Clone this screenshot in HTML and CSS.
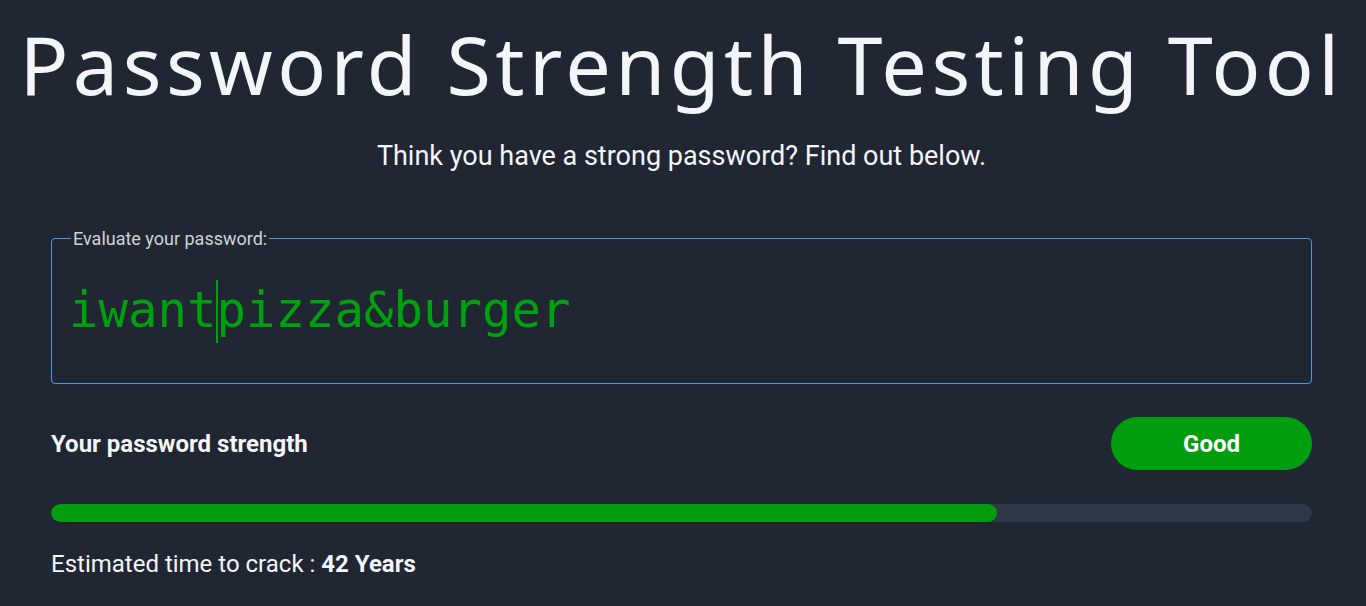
FILE: index.html
```html
<!DOCTYPE html>
<html lang="en">
<head>
<meta charset="utf-8">
<title>Password Strength Testing Tool</title>
<link rel="stylesheet" href="styles.css">
</head>
<body>
<main class="page">
  <h1 class="title">Password Strength Testing Tool</h1>
  <p class="subtitle">Think you have a strong password? Find out below.</p>
  <fieldset class="field">
    <legend class="legend">Evaluate your password:</legend>
    <div class="input"><span>iwant</span><span class="caret"></span><span>pizza&amp;burger</span></div>
  </fieldset>
  <div class="strength-row">
    <span class="strength-label">Your password strength</span>
    <span class="badge">Good</span>
  </div>
  <div class="track"><div class="fill" style="width:75%"></div></div>
  <p class="crack">Estimated time to crack : <strong>42 Years</strong></p>
</main>
</body>
</html>
```
FILE: styles.css
```css
html, body {
  margin: 0;
  background: #212633;
  color: #f3f5f8;
  font-family: Roboto, "Liberation Sans", sans-serif;
}
.page {
  width: 1261px;
  margin: 0 auto 0 51px;
  display: flex;
  flex-direction: column;
}
.title {
  margin: 14px -60px 0;
  text-align: center;
  font-family: "Noto Sans", "Open Sans", sans-serif;
  font-weight: 400;
  font-size: 81px;
  line-height: 100px;
  letter-spacing: 4.4px;
  color: #f3f5f8;
}
.subtitle {
  margin: 25px 0 0;
  text-align: center;
  font-size: 27px;
  line-height: 34px;
  color: #f3f5f8;
}
.field {
  margin: 55px 0 0;
  padding: 0 20px 0 17px;
  border: 1px solid #4f95ea;
  border-radius: 4px;
}
.legend {
  margin: 0 0 0 2px;
  padding: 0 2px;
  font-size: 18px;
  line-height: 21px;
  color: #cfd3da;
}
.input {
  height: 134px;
  box-sizing: border-box;
  padding-bottom: 10px;
  display: flex;
  align-items: center;
  font-family: "DejaVu Sans Mono", "Liberation Mono", monospace;
  font-size: 49px;
  line-height: 64px;
  color: #00a00e;
}
.caret {
  width: 2px;
  height: 63px;
  background: #00a00e;
  margin: 0 -1px;
}
.strength-row {
  margin-top: 33px;
  display: flex;
  justify-content: space-between;
  align-items: center;
}
.strength-label {
  font-size: 24px;
  font-weight: 700;
}
.badge {
  width: 201px;
  height: 53px;
  border-radius: 27px;
  background: #009e0f;
  color: #fff;
  font-size: 24px;
  font-weight: 700;
  display: flex;
  align-items: center;
  justify-content: center;
}
.track {
  margin-top: 34px;
  height: 18px;
  border-radius: 9px;
  background: #2f3846;
  overflow: hidden;
}
.fill {
  height: 100%;
  border-radius: 9px;
  background: #009e0f;
}
.crack {
  margin: 28px 0 0;
  font-size: 24px;
  line-height: 28px;
}
.crack strong {
  font-weight: 700;
}
```
